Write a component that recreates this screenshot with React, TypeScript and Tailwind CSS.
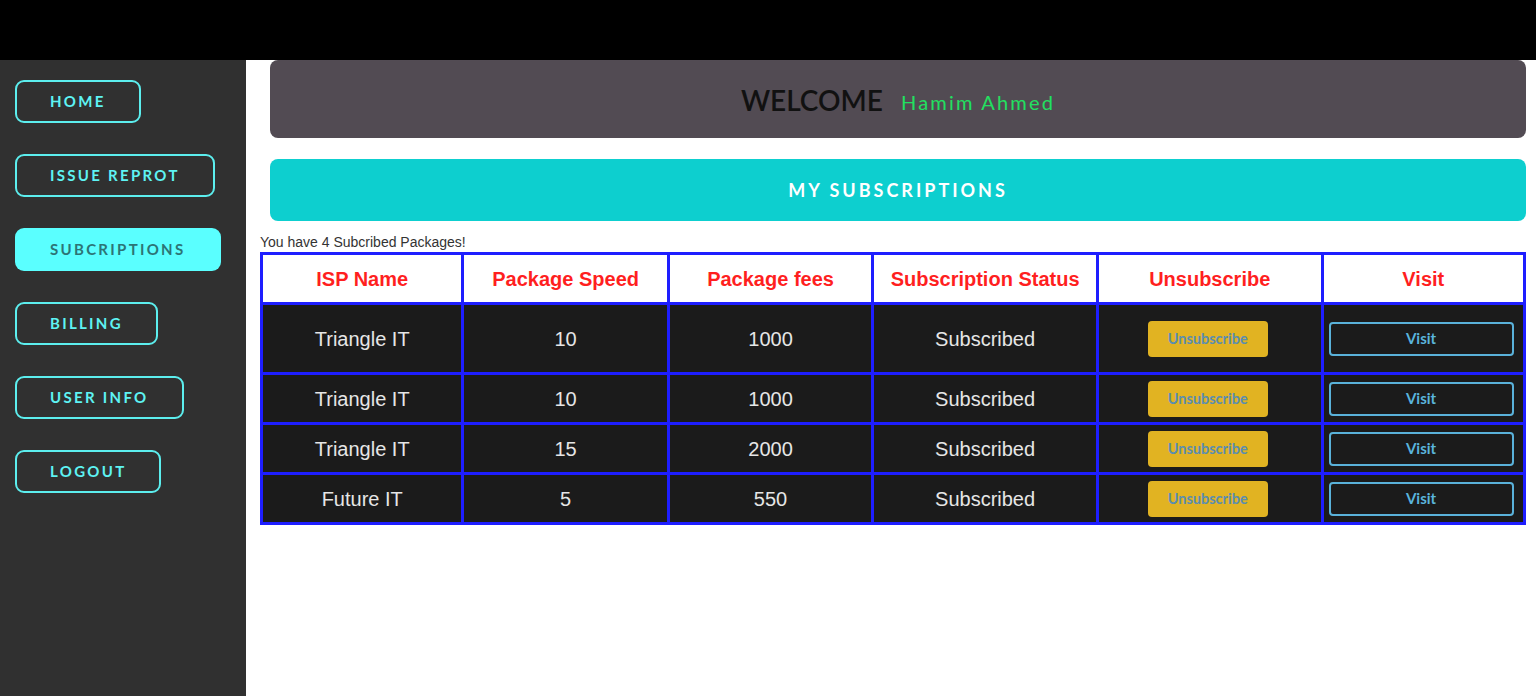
import React from 'react';

const navItems = [
    { label: 'HOME', active: false },
    { label: 'ISSUE REPROT', active: false },
    { label: 'SUBCRIPTIONS', active: true },
    { label: 'BILLING', active: false },
    { label: 'USER INFO', active: false },
    { label: 'LOGOUT', active: false },
];

const rows = [
    { isp: 'Triangle IT', speed: '10', fees: '1000', status: 'Subscribed', tall: true },
    { isp: 'Triangle IT', speed: '10', fees: '1000', status: 'Subscribed', tall: false },
    { isp: 'Triangle IT', speed: '15', fees: '2000', status: 'Subscribed', tall: false },
    { isp: 'Future IT', speed: '5', fees: '550', status: 'Subscribed', tall: false },
];

const headers = ['ISP Name', 'Package Speed', 'Package fees', 'Subscription Status', 'Unsubscribe', 'Visit'];
// widths minus the shared 3px border
const colWidths = ['w-[199px]', 'w-[203px]', 'w-[202px]', 'w-[222px]', 'w-[222px]', 'w-[200px]'];

const lato = "font-['Lato',sans-serif]";
const arial = "font-['Liberation_Sans',Arial,sans-serif]";

function Sidebar() {
    return (
        <aside className="w-[246px] shrink-0 bg-[#303030] pt-[20px] pl-[15px] flex flex-col items-start gap-[31px]">
            {navItems.map((item) => (
                <button
                    key={item.label}
                    className={
                        item.active
                            ? `h-[43px] px-[35px] rounded-[9px] bg-[#5affff] text-[#2d7476] text-[15px] font-bold tracking-[2.3px] ${lato}`
                            : `h-[43px] px-[33px] rounded-[9px] border-2 border-[#5ceeee] text-[#5ef3f3] text-[15px] font-bold tracking-[2.3px] ${lato}`
                    }
                >
                    {item.label}
                </button>
            ))}
        </aside>
    );
}

export default function App() {
    return (
        <div className="w-[1536px] h-[696px] bg-white flex flex-col overflow-hidden">
            <div className="h-[60px] bg-black shrink-0" />
            <div className="flex flex-1">
                <Sidebar />
                <main className="w-[1290px] shrink-0 pl-[14px] pr-[10px]">
                    <div className="ml-[10px] h-[78px] rounded-[8px] bg-[#524b53] flex items-center justify-center gap-[18px] pt-[2px]">
                        <span className={`text-[28px] font-semibold text-[#111] ${lato}`}>WELCOME</span>
                        <span className={`text-[20px] text-[#22e060] tracking-[2.2px] pt-[3px] ${lato}`}>Hamim Ahmed</span>
                    </div>
                    <div className="ml-[10px] mt-[21px] h-[62px] rounded-[8px] bg-[#0dcfcf] flex items-center justify-center">
                        <span className={`text-[18px] font-bold text-white tracking-[3px] ${lato}`}>MY SUBSCRIPTIONS</span>
                    </div>
                    <p className={`mt-[11px] text-[14px] leading-[20px] text-[#333] ${arial}`}>You have 4 Subcribed Packages!</p>
                    <table className={`w-full border-collapse border-[3px] border-[#1e1eff] table-fixed ${arial}`}>
                        <thead>
                            <tr className="h-[50px] bg-white">
                                {headers.map((h, i) => (
                                    <th key={h} className={`${colWidths[i]} border-[3px] border-[#1e1eff] text-[20px] font-bold text-[#ff1f1f] text-center`}>
                                        {h}
                                    </th>
                                ))}
                            </tr>
                        </thead>
                        <tbody>
                            {rows.map((r, idx) => (
                                <tr key={idx} className={`${r.tall ? 'h-[70px]' : 'h-[50px]'} bg-[#1b1b1b] text-[20px] text-[#e6e6e6] text-center`}>
                                    <td className="border-[3px] border-[#1e1eff]">{r.isp}</td>
                                    <td className="border-[3px] border-[#1e1eff]">{r.speed}</td>
                                    <td className="border-[3px] border-[#1e1eff]">{r.fees}</td>
                                    <td className="border-[3px] border-[#1e1eff]">{r.status}</td>
                                    <td className="border-[3px] border-[#1e1eff] pr-[4px]">
                                        <button className={`w-[120px] h-[36px] rounded-[4px] bg-[#e1b322] text-[#5a8db0] text-[14.5px] font-bold ${lato}`}>
                                            Unsubscribe
                                        </button>
                                    </td>
                                    <td className="border-[3px] border-[#1e1eff] pl-[5px] text-left">
                                        <button className={`w-[185px] h-[34px] rounded-[4px] border-2 border-[#5ab2da] text-[#5ab4dc] text-[15px] font-bold ${lato}`}>
                                            Visit
                                        </button>
                                    </td>
                                </tr>
                            ))}
                        </tbody>
                    </table>
                </main>
            </div>
        </div>
    );
}
